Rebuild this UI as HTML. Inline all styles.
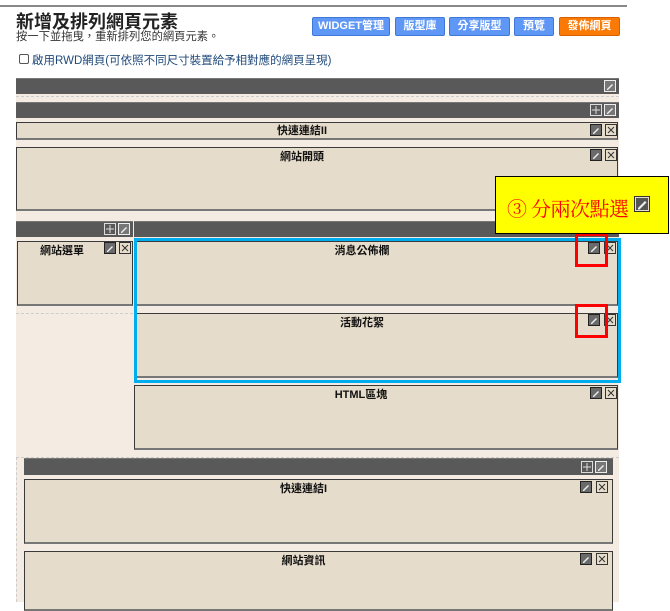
<!DOCTYPE html>
<html><head><meta charset="utf-8"><style>
*{margin:0;padding:0;box-sizing:border-box}
body{width:670px;height:602px;overflow:hidden;background:#fff;position:relative;font-family:"Liberation Sans","Noto Sans CJK TC",sans-serif}
.a{position:absolute}
.bar{position:absolute;background:#595959;border-top:1px solid #777}
.box{position:absolute;background:#e6dccb;border:1px solid #3a3a3a;border-bottom:2px solid #777;text-align:center;font-size:11px;line-height:13px;font-weight:bold;color:#111;padding-top:3px;padding-right:30px}
.btn{position:absolute;top:17px;height:19px;background:#5e97f6;border:1px solid #3f78d6;color:#fff;font-size:11px;font-weight:bold;text-align:center;line-height:17px;border-radius:2px}
.ic{position:absolute;width:12px;height:12px}
</style></head><body>
<div class="a" style="left:0;top:5px;width:627px;height:2px;background:#888"></div>
<div class="a" style="left:16px;top:8px;font-size:18px;font-weight:bold;color:#222">新增及排列網頁元素</div>
<div class="a" style="left:16px;top:28px;font-size:11.3px;color:#333">按一下並拖曳，重新排列您的網頁元素。</div>
<div class="btn" style="left:312px;width:78px">WIDGET管理</div>
<div class="btn" style="left:395px;width:50px">版型庫</div>
<div class="btn" style="left:449px;width:61px">分享版型</div>
<div class="btn" style="left:514px;width:40px">預覽</div>
<div class="btn" style="left:559px;width:61px;background:#fb7a05;border-color:#d86000">發佈網頁</div>
<div class="a" style="left:19px;top:54px;width:10px;height:10px;border:1px solid #555;border-radius:2px;background:#fff"></div>
<div class="a" style="left:32px;top:52px;font-size:11.5px;color:#1f4a7a">啟用RWD網頁(可依照不同尺寸裝置給予相對應的網頁呈現)</div>

<div class="a" style="left:16px;top:78px;width:603px;height:524px;background:#f4ece2"></div>
<div class="bar" style="left:16px;top:78px;width:603px;height:16px"></div>
<svg class="ic" style="left:604px;top:80px" viewBox="0 0 12 12"><rect x=".5" y=".5" width="11" height="11" fill="#777" stroke="#eee"/><path d="M3 9l5-5 1 1-5 5H3z" fill="#eee"/></svg>
<div class="a" style="left:16px;top:96px;width:603px;height:0;border-top:1px dashed #ccc"></div>
<div class="bar" style="left:16px;top:102px;width:603px;height:16px"></div>
<svg class="ic" style="left:590px;top:104px" viewBox="0 0 12 12"><rect x=".5" y=".5" width="11" height="11" fill="#595959" stroke="#ddd"/><path d="M6 2v8M2 6h8" stroke="#ddd"/></svg>
<svg class="ic" style="left:604px;top:104px" viewBox="0 0 12 12"><rect x=".5" y=".5" width="11" height="11" fill="#777" stroke="#eee"/><path d="M3 9l5-5 1 1-5 5H3z" fill="#eee"/></svg>

<div class="box" style="left:16px;top:122px;width:602px;height:18px;padding-top:2px">快速連結II</div>
<div class="box" style="left:16px;top:147px;width:602px;height:64px">網站開頭</div>

<div class="bar" style="left:16px;top:221px;width:117px;height:16px"></div>
<div class="bar" style="left:134px;top:221px;width:485px;height:16px"></div>
<svg class="ic" style="left:104px;top:223px" viewBox="0 0 12 12"><rect x=".5" y=".5" width="11" height="11" fill="#595959" stroke="#ddd"/><path d="M6 2v8M2 6h8" stroke="#ddd"/></svg>
<svg class="ic" style="left:118px;top:223px" viewBox="0 0 12 12"><rect x=".5" y=".5" width="11" height="11" fill="#777" stroke="#eee"/><path d="M3 9l5-5 1 1-5 5H3z" fill="#eee"/></svg>
<div class="box" style="left:17px;top:241px;width:116px;height:65px;text-align:left;padding-left:22px;padding-right:0">網站選單</div>
<div class="a" style="left:16px;top:313px;width:117px;border-top:1px dashed #ccc"></div>

<div class="box" style="left:136px;top:241px;width:482px;height:65px">消息公佈欄</div>
<div class="box" style="left:136px;top:313px;width:482px;height:65px">活動花絮</div>
<div class="a" style="left:134px;top:238px;width:487px;height:145px;border:3px solid #00aeef"></div>
<div class="box" style="left:134px;top:385px;width:484px;height:65px">HTML區塊</div>

<div class="a" style="left:16px;top:457px;width:603px;height:145px;border-left:1px dashed #ccc;border-top:1px dashed #ccc"></div>
<div class="bar" style="left:24px;top:458px;width:589px;height:17px"></div>
<svg class="ic" style="left:581px;top:461px" viewBox="0 0 12 12"><rect x=".5" y=".5" width="11" height="11" fill="#595959" stroke="#ddd"/><path d="M6 2v8M2 6h8" stroke="#ddd"/></svg>
<svg class="ic" style="left:595px;top:461px" viewBox="0 0 12 12"><rect x=".5" y=".5" width="11" height="11" fill="#777" stroke="#eee"/><path d="M3 9l5-5 1 1-5 5H3z" fill="#eee"/></svg>
<div class="box" style="left:24px;top:479px;width:589px;height:65px">快速連結I</div>
<div class="box" style="left:24px;top:551px;width:589px;height:60px">網站資訊</div>

<svg width="0" height="0" style="position:absolute"><defs>
<symbol id="e" viewBox="0 0 12 12"><rect x=".5" y=".5" width="11" height="11" fill="#6a6a6a" stroke="#222"/><path d="M3 9l5-5 1 1-5 5H3z" fill="#eee"/></symbol>
<symbol id="x" viewBox="0 0 12 12"><rect x=".5" y=".5" width="11" height="11" fill="#e6dccb" stroke="#333"/><path d="M3 3l6 6M9 3l-6 6" stroke="#333"/></symbol>
</defs></svg>
<svg class="ic" style="left:590px;top:124px"><use href="#e"/></svg><svg class="ic" style="left:605px;top:124px"><use href="#x"/></svg>
<svg class="ic" style="left:590px;top:149px"><use href="#e"/></svg><svg class="ic" style="left:605px;top:149px"><use href="#x"/></svg>
<svg class="ic" style="left:104px;top:242px"><use href="#e"/></svg><svg class="ic" style="left:119px;top:242px"><use href="#x"/></svg>
<svg class="ic" style="left:588px;top:242px"><use href="#e"/></svg><svg class="ic" style="left:604px;top:242px"><use href="#x"/></svg>
<svg class="ic" style="left:588px;top:314px"><use href="#e"/></svg><svg class="ic" style="left:604px;top:314px"><use href="#x"/></svg>
<svg class="ic" style="left:590px;top:387px"><use href="#e"/></svg><svg class="ic" style="left:605px;top:387px"><use href="#x"/></svg>
<svg class="ic" style="left:580px;top:481px"><use href="#e"/></svg><svg class="ic" style="left:596px;top:481px"><use href="#x"/></svg>
<svg class="ic" style="left:580px;top:553px"><use href="#e"/></svg><svg class="ic" style="left:596px;top:553px"><use href="#x"/></svg>

<div class="a" style="left:575px;top:233px;width:33px;height:34px;border:3px solid #f00"></div>
<div class="a" style="left:575px;top:304px;width:33px;height:34px;border:3px solid #f00"></div>

<div class="a" style="left:495px;top:176px;width:174px;height:58px;background:#ffff00;border:1px solid #000"></div>
<div class="a" style="left:507px;top:193px;font-size:20px;color:#f00;font-family:'Liberation Serif','Noto Serif CJK SC',serif;white-space:nowrap;letter-spacing:-0.5px">③ 分兩次點選</div>
<svg class="a" style="left:634px;top:196px;width:16px;height:16px" viewBox="0 0 16 16"><rect x=".5" y=".5" width="15" height="15" fill="#e6dccb" stroke="#333"/><rect x="2" y="2" width="12" height="12" fill="#555"/><path d="M4 12l7-7 1.5 1.5-7 7H4z" fill="#eee"/></svg>
</body></html>
